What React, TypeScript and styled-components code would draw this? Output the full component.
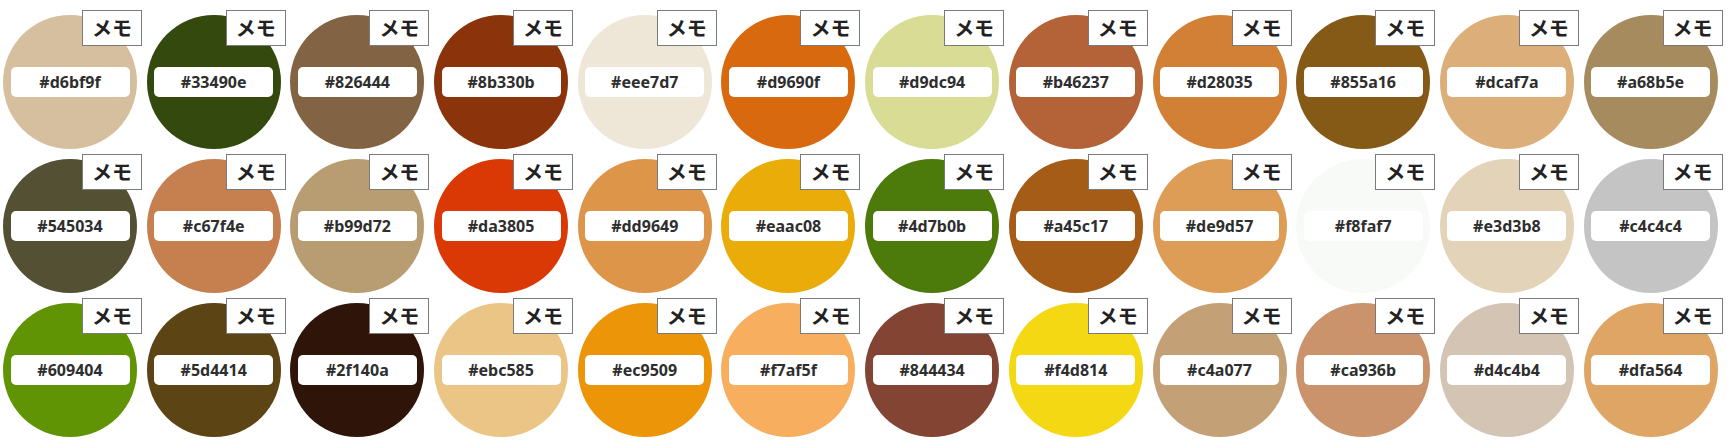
import React from 'react';
import styled, { createGlobalStyle } from 'styled-components';

const COLORS = [
  ['d6bf9f', '33490e', '826444', '8b330b', 'eee7d7', 'd9690f', 'd9dc94', 'b46237', 'd28035', '855a16', 'dcaf7a', 'a68b5e'],
  ['545034', 'c67f4e', 'b99d72', 'da3805', 'dd9649', 'eaac08', '4d7b0b', 'a45c17', 'de9d57', 'f8faf7', 'e3d3b8', 'c4c4c4'],
  ['609404', '5d4414', '2f140a', 'ebc585', 'ec9509', 'f7af5f', '844434', 'f4d814', 'c4a077', 'ca936b', 'd4c4b4', 'dfa564'],
];

const GlobalStyle = createGlobalStyle`
  html, body {
    margin: 0;
    padding: 0;
    background: #fff;
    font-family: "Noto Sans", "Noto Sans CJK JP", sans-serif;
  }
`;

const Palette = styled.div`
  display: grid;
  grid-template-columns: repeat(12, 143.7px);
  row-gap: 10px;
  padding: 15px 0 0 3px;
`;

const Swatch = styled.div<{ $color: string }>`
  position: relative;
  width: 134px;
  height: 134px;
  border-radius: 50%;
  background: ${(p) => p.$color};
  display: flex;
  align-items: center;
  justify-content: center;
`;

const Code = styled.div`
  width: 119px;
  height: 30px;
  background: #fff;
  border-radius: 5px;
  display: flex;
  align-items: center;
  justify-content: center;
  font-size: 16px;
  font-weight: 700;
  color: #2e2e2e;
`;

const MemoButton = styled.button`
  position: absolute;
  top: -5px;
  right: -5px;
  width: 60px;
  height: 36px;
  padding: 0;
  background: #fff;
  border: 1px solid #7a7a7a;
  border-radius: 0;
  font-family: "Noto Sans CJK JP", sans-serif;
  font-size: 20px;
  line-height: 1;
  font-weight: 700;
  color: #222;
  cursor: pointer;
`;

export default function App() {
  return (
    <>
      <GlobalStyle />
      <Palette>
        {COLORS.flat().map((hex) => (
          <Swatch key={hex} $color={`#${hex}`}>
            <Code>#{hex}</Code>
            <MemoButton>メモ</MemoButton>
          </Swatch>
        ))}
      </Palette>
    </>
  );
}
